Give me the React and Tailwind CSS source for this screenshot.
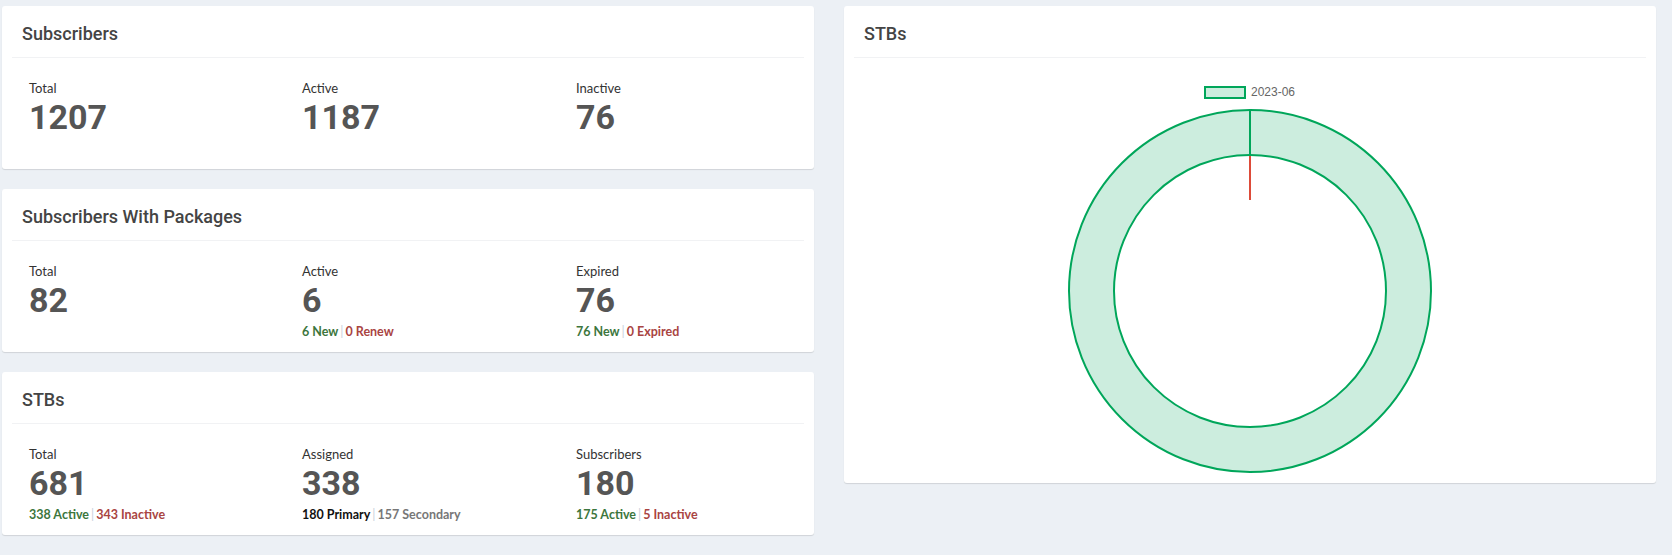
import React from "react";

function Sub({ parts }) {
  return (
    <div className="h-[20px] leading-[20px] text-[12.5px] font-bold font-['Lato',sans-serif]">
      {parts &&
        parts.map((p, i) => (
          <React.Fragment key={i}>
            {i > 0 && <span className="text-[#c9d2dc] font-normal px-[2px]">|</span>}
            <span className={p.c}>{p.t}</span>
          </React.Fragment>
        ))}
    </div>
  );
}

function Stat({ label, value, parts }) {
  return (
    <div>
      <div className="text-[13px] leading-[20px] text-[#333] font-['Lato',sans-serif]">{label}</div>
      <div className="text-[34px] leading-[39px] mb-[2px] font-bold text-[#555] font-['Roboto',sans-serif]">{value}</div>
      <Sub parts={parts} />
    </div>
  );
}

function Card({ title, children }) {
  return (
    <div className="bg-white rounded-[3px] shadow-[0_1px_1px_rgba(0,0,0,0.12)]">
      <div className="mx-[10px] px-[10px] pt-[14px] pb-[10px] border-b border-[#f1f2f4]">
        <h3 className="text-[18px] leading-[27px] font-medium text-[#444] font-['Roboto',sans-serif]">{title}</h3>
      </div>
      {children}
    </div>
  );
}

function StatsCard({ title, stats }) {
  return (
    <Card title={title}>
      <div className="grid grid-cols-[273px_274px_1fr] pl-[27px] pt-[20px] pb-[10px]">
        {stats.map((s, i) => (
          <Stat key={i} {...s} />
        ))}
      </div>
    </Card>
  );
}

const G = "text-[#3c763d]";
const R = "text-[#a94442]";

export default function App() {
  return (
    <div className="min-h-screen bg-[#ecf0f5] pt-[6px] pl-[2px]">
      <div className="grid grid-cols-[812px_812px] gap-x-[30px] items-start">
        <div className="flex flex-col gap-[20px]">
          <StatsCard
            title="Subscribers"
            stats={[
              { label: "Total", value: "1207" },
              { label: "Active", value: "1187" },
              { label: "Inactive", value: "76" },
            ]}
          />
          <StatsCard
            title="Subscribers With Packages"
            stats={[
              { label: "Total", value: "82" },
              {
                label: "Active",
                value: "6",
                parts: [
                  { t: "6 New", c: G },
                  { t: "0 Renew", c: R },
                ],
              },
              {
                label: "Expired",
                value: "76",
                parts: [
                  { t: "76 New", c: G },
                  { t: "0 Expired", c: R },
                ],
              },
            ]}
          />
          <StatsCard
            title="STBs"
            stats={[
              {
                label: "Total",
                value: "681",
                parts: [
                  { t: "338 Active", c: G },
                  { t: "343 Inactive", c: R },
                ],
              },
              {
                label: "Assigned",
                value: "338",
                parts: [
                  { t: "180 Primary", c: "text-[#111]" },
                  { t: "157 Secondary", c: "text-[#777]" },
                ],
              },
              {
                label: "Subscribers",
                value: "180",
                parts: [
                  { t: "175 Active", c: G },
                  { t: "5 Inactive", c: R },
                ],
              },
            ]}
          />
        </div>
        <Card title="STBs">
          <svg width="812" height="425" viewBox="0 0 812 425" className="block">
            <rect x="361" y="29" width="40" height="11" fill="rgba(0,166,90,0.2)" stroke="#00a65a" strokeWidth="2" />
            <text
              x="407"
              y="34.5"
              dominantBaseline="middle"
              fontSize="12"
              fill="#666"
              fontFamily="'Liberation Sans', Arial, sans-serif"
            >
              2023-06
            </text>
            <circle cx="406" cy="233" r="158.5" fill="none" stroke="rgba(0,166,90,0.2)" strokeWidth="45" />
            <circle cx="406" cy="233" r="181" fill="none" stroke="#00a65a" strokeWidth="2" />
            <circle cx="406" cy="233" r="136" fill="none" stroke="#00a65a" strokeWidth="2" />
            <line x1="406" y1="52" x2="406" y2="97" stroke="#00a65a" strokeWidth="2" />
            <line x1="406" y1="98" x2="406" y2="142" stroke="#dd4b39" strokeWidth="2" />
          </svg>
        </Card>
      </div>
    </div>
  );
}
